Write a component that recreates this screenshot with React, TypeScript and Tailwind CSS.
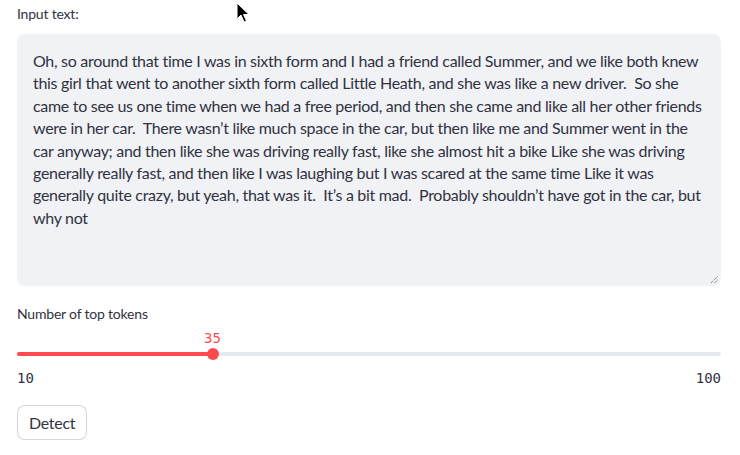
import React from 'react';

const lines = [
  'Oh, so around that time I was in sixth form and I had a friend called Summer, and we like both knew',
  'this girl that went to another sixth form called Little Heath, and she was like a new driver.  So she',
  'came to see us one time when we had a free period, and then she came and like all her other friends',
  'were in her car.  There wasn\u2019t like much space in the car, but then like me and Summer went in the',
  'car anyway; and then like she was driving really fast, like she almost hit a bike Like she was driving',
  'generally really fast, and then like I was laughing but I was scared at the same time Like it was',
  'generally quite crazy, but yeah, that was it.  It\u2019s a bit mad.  Probably shouldn\u2019t have got in the car, but',
  'why not',
];

const MIN = 10;
const MAX = 100;
const VALUE = 35;

const Cursor: React.FC = () => (
  <svg
    className="absolute left-[236px] top-[2px]"
    width="14"
    height="22"
    viewBox="0 0 14 22"
  >
    <path
      d="M1 1 L1 17 L5 13 L8 20 L10.5 19 L7.5 12.5 L13 12.5 Z"
      fill="#000"
      stroke="#fff"
      strokeWidth="1"
      strokeLinejoin="round"
    />
  </svg>
);

const App: React.FC = () => {
  const pct = ((VALUE - MIN) / (MAX - MIN)) * 100;

  return (
    <div
      className="relative w-[740px] h-[455px] bg-white text-[#31333f] pl-[17px] pr-[19px] pt-[4px] overflow-hidden"
      style={{ fontFamily: '"Lato", "Noto Sans", sans-serif' }}
    >
      {/* Text input */}
      <label className="block text-[14px] leading-5 mb-[10px] tracking-[-0.2px]">Input text:</label>
      <div className="relative h-[252px] w-full rounded-lg bg-[#f0f2f6] px-4 py-[16px] text-[16px] leading-[22.4px] tracking-[-0.3px]">
        {lines.map((line, i) => (
          <div key={i} className="whitespace-pre">
            {line}
          </div>
        ))}
        {/* resize grip */}
        <svg className="absolute right-[2px] bottom-[2px]" width="9" height="9" viewBox="0 0 9 9">
          <path d="M1 8 L8 1 M4.5 8 L8 4.5" stroke="#555" strokeWidth="1" strokeDasharray="1 1" />
        </svg>
      </div>

      {/* Slider */}
      <label className="block text-[14px] leading-5 mt-[18px] tracking-[-0.2px]">Number of top tokens</label>
      <div className="relative mt-[4px] h-[20px]">
        <span
          className="absolute -translate-x-1/2 text-[14px] leading-5 text-[#ff4b4b]"
          style={{ left: `${pct}%`, fontFamily: '"DejaVu Sans Mono", monospace' }}
        >
          {VALUE}
        </span>
      </div>
      <div className="relative h-[12px] flex items-center">
        <div className="h-[4px] w-full rounded-full bg-[#e6e9ef]">
          <div className="h-full rounded-full bg-[#ff4b4b]" style={{ width: `${pct}%` }} />
        </div>
        <div
          className="absolute top-0 h-[12px] w-[12px] -translate-x-1/2 rounded-full bg-[#ff4b4b]"
          style={{ left: `${pct}%` }}
        />
      </div>
      <div
        className="flex justify-between text-[14px] leading-5 mt-[8px]"
        style={{ fontFamily: '"DejaVu Sans Mono", monospace' }}
      >
        <span>{MIN}</span>
        <span>{MAX}</span>
      </div>

      {/* Button */}
      <button className="mt-[17px] h-[35px] rounded-lg border border-[#31333f]/20 bg-white px-[11px] text-[16px] tracking-[-0.3px]">
        Detect
      </button>

      <Cursor />
    </div>
  );
};

export default App;
